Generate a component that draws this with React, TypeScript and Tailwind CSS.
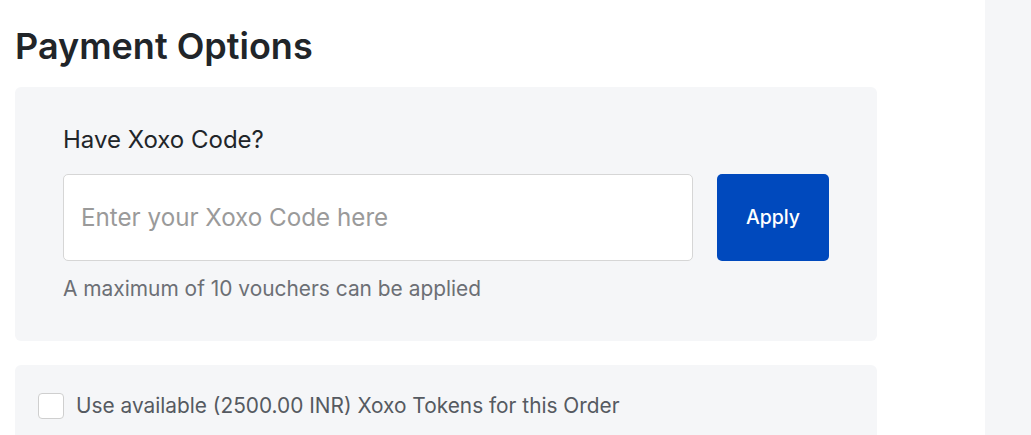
import React from "react";

export default function App() {
  return (
    <div className="flex w-[1031px] h-[435px] overflow-hidden bg-white font-['Inter',sans-serif]">
      <div className="w-[985px] pl-[15px] pt-[22px]">
        <div className="w-[862px]">
          <h1 className="text-[36px] leading-[48px] font-semibold text-[#212529]">Payment Options</h1>
          <div className="mt-[17px] rounded-[6px] bg-[#f5f6f8] px-[48px] pt-[35px] pb-[37px]">
            <div className="text-[24px] leading-[36px] text-[#212529]">Have Xoxo Code?</div>
            <div className="mt-[16px] flex gap-[24px]">
              <input
                className="h-[87px] w-[630px] rounded-[5px] border border-[#d6d6d6] bg-white px-[17px] text-[24.2px] text-[#212529] outline-none placeholder:text-[#9a9a9a]"
                placeholder="Enter your Xoxo Code here"
              />
              <button className="h-[87px] w-[112px] rounded-[5px] bg-[#0049bd] text-[19.5px] font-medium text-white">Apply</button>
            </div>
            <div className="mt-[13px] text-[20.9px] leading-[30px] text-[#6c6f75]">A maximum of 10 vouchers can be applied</div>
          </div>
          <div className="mt-[24px] rounded-[6px] bg-[#f5f6f8] px-[23px] pt-[27px] pb-[30px]">
            <label className="flex items-center gap-[12px]">
              <span className="h-[26px] w-[26px] rounded-[4px] border border-[#cfcfcf] bg-white" />
              <span className="text-[20.85px] leading-[27px] text-[#555a61]">Use available (2500.00 INR) Xoxo Tokens for this Order</span>
            </label>
          </div>
        </div>
      </div>
      <div className="flex-1 bg-[#f5f6f8]" />
    </div>
  );
}
